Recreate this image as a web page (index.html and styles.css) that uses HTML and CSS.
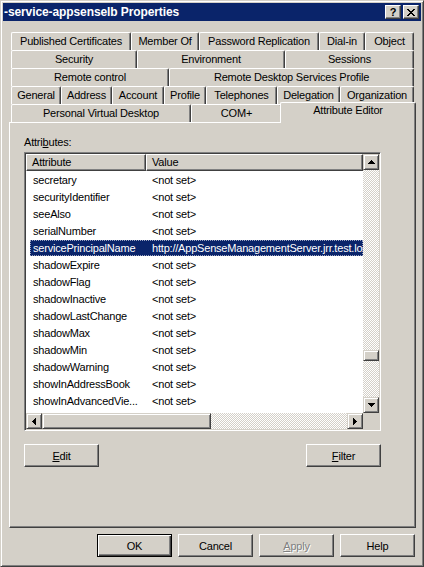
FILE: index.html
```html
<!DOCTYPE html>
<html>
<head>
<meta charset="utf-8">
<link rel="stylesheet" href="styles.css">
</head>
<body>
<div class="window">
  <div class="titlebar">
    <span class="title">-service-appsenselb Properties</span>
    <div class="caption-btns">
      <span class="cbtn help">?</span>
      <span class="cbtn close"><svg width="8" height="7" viewBox="0 0 8 7" shape-rendering="crispEdges"><path d="M0 0h2v1H0zM6 0h2v1H6zM1 1h2v1H1zM5 1h2v1H5zM2 2h4v1H2zM3 3h2v1H3zM2 4h4v1H2zM1 5h2v1H1zM5 5h2v1H5zM0 6h2v1H0zM6 6h2v1H6z" fill="#000"/></svg></span>
    </div>
  </div>
  <div class="content">
    <div class="tabs">
      <div class="tabrow r1">
        <div class="tab">Published Certificates</div>
        <div class="tab">Member Of</div>
        <div class="tab">Password Replication</div>
        <div class="tab">Dial-in</div>
        <div class="tab">Object</div>
      </div>
      <div class="tabrow r2">
        <div class="tab">Security</div>
        <div class="tab">Environment</div>
        <div class="tab">Sessions</div>
      </div>
      <div class="tabrow r3">
        <div class="tab">Remote control</div>
        <div class="tab">Remote Desktop Services Profile</div>
      </div>
      <div class="tabrow r4">
        <div class="tab">General</div>
        <div class="tab">Address</div>
        <div class="tab">Account</div>
        <div class="tab">Profile</div>
        <div class="tab">Telephones</div>
        <div class="tab">Delegation</div>
        <div class="tab">Organization</div>
      </div>
      <div class="tabrow r5">
        <div class="tab">Personal Virtual Desktop</div>
        <div class="tab">COM+</div>
        <div class="tab active">Attribute Editor</div>
      </div>
    </div>
    <div class="panel">
      <div class="label">Attri<u>b</u>utes:</div>
      <div class="listbox">
        <div class="lv">
          <div class="lv-header">
            <div class="hcol hc1">Attribute</div>
            <div class="hcol hc2">Value</div>
          </div>
          <div class="lv-rows">
            <div class="row"><div class="rowin"><span class="rc1">secretary</span><span class="rc2">&lt;not set&gt;</span></div></div>
            <div class="row"><div class="rowin"><span class="rc1">securityIdentifier</span><span class="rc2">&lt;not set&gt;</span></div></div>
            <div class="row"><div class="rowin"><span class="rc1">seeAlso</span><span class="rc2">&lt;not set&gt;</span></div></div>
            <div class="row"><div class="rowin"><span class="rc1">serialNumber</span><span class="rc2">&lt;not set&gt;</span></div></div>
            <div class="row sel"><div class="rowin"><span class="rc1">servicePrincipalName</span><span class="rc2">http://AppSenseManagementServer.jrr.test.local</span></div></div>
            <div class="row"><div class="rowin"><span class="rc1">shadowExpire</span><span class="rc2">&lt;not set&gt;</span></div></div>
            <div class="row"><div class="rowin"><span class="rc1">shadowFlag</span><span class="rc2">&lt;not set&gt;</span></div></div>
            <div class="row"><div class="rowin"><span class="rc1">shadowInactive</span><span class="rc2">&lt;not set&gt;</span></div></div>
            <div class="row"><div class="rowin"><span class="rc1">shadowLastChange</span><span class="rc2">&lt;not set&gt;</span></div></div>
            <div class="row"><div class="rowin"><span class="rc1">shadowMax</span><span class="rc2">&lt;not set&gt;</span></div></div>
            <div class="row"><div class="rowin"><span class="rc1">shadowMin</span><span class="rc2">&lt;not set&gt;</span></div></div>
            <div class="row"><div class="rowin"><span class="rc1">shadowWarning</span><span class="rc2">&lt;not set&gt;</span></div></div>
            <div class="row"><div class="rowin"><span class="rc1">showInAddressBook</span><span class="rc2">&lt;not set&gt;</span></div></div>
            <div class="row"><div class="rowin"><span class="rc1">showInAdvancedVie...</span><span class="rc2">&lt;not set&gt;</span></div></div>
            <div class="row"><div class="rowin"><span class="rc1">sIDHistory</span><span class="rc2">&lt;not set&gt;</span></div></div>
          </div>
        </div>
        <div class="vscroll">
          <div class="sbtn"><svg width="7" height="4" viewBox="0 0 7 4" shape-rendering="crispEdges"><path d="M3 0h1v1H3zM2 1h3v1H2zM1 2h5v1H1zM0 3h7v1H0z" fill="#000"/></svg></div>
          <div class="vtrack"><div class="vthumb"></div></div>
          <div class="sbtn"><svg width="7" height="4" viewBox="0 0 7 4" shape-rendering="crispEdges"><path d="M0 0h7v1H0zM1 1h5v1H1zM2 2h3v1H2zM3 3h1v1H3z" fill="#000"/></svg></div>
        </div>
        <div class="hscroll">
          <div class="sbtn"><svg width="4" height="7" viewBox="0 0 4 7" shape-rendering="crispEdges"><path d="M3 0h1v7H3zM2 1h1v5H2zM1 2h1v3H1zM0 3h1v1H0z" fill="#000"/></svg></div>
          <div class="htrack"><div class="hthumb"></div></div>
          <div class="sbtn"><svg width="4" height="7" viewBox="0 0 4 7" shape-rendering="crispEdges"><path d="M0 0h1v7H0zM1 1h1v5H1zM2 2h1v3H2zM3 3h1v1H3z" fill="#000"/></svg></div>
        </div>
        <div class="corner"></div>
      </div>
      <div class="pbtns">
        <button class="btn"><u>E</u>dit</button>
        <button class="btn"><u>F</u>ilter</button>
      </div>
    </div>
    <div class="dbtns">
      <button class="btn default">OK</button>
      <button class="btn">Cancel</button>
      <button class="btn disabled"><u>A</u>pply</button>
      <button class="btn">Help</button>
    </div>
  </div>
</div>
</body>
</html>
```
FILE: styles.css
```css
* { box-sizing: border-box; }
html, body { margin: 0; padding: 0; }
body {
  width: 424px;
  height: 567px;
  overflow: hidden;
  background: #d4d0c8;
  font-family: "Liberation Sans", Arial, sans-serif;
  font-size: 11px;
  letter-spacing: -0.2px;
  color: #000;
}
.window {
  width: 424px;
  height: 567px;
  border: 1px solid;
  border-color: #d4d0c8 #404040 #404040 #d4d0c8;
  box-shadow: inset 1px 1px #fff, inset -1px -1px #808080;
  padding: 2px;
  background: #d4d0c8;
  display: flex;
  flex-direction: column;
}
.titlebar {
  height: 18px;
  flex-shrink: 0;
  background: #0a246a;
  color: #fff;
  display: flex;
  align-items: center;
  justify-content: space-between;
}
.title {
  font-weight: bold;
  font-size: 12px;
  letter-spacing: -0.1px;
  padding-left: 1px;
}
.caption-btns { display: flex; gap: 2px; margin-right: 2px; }
.cbtn {
  width: 16px;
  height: 14px;
  background: #d4d0c8;
  border: 1px solid;
  border-color: #fff #404040 #404040 #fff;
  box-shadow: inset -1px -1px #808080;
  display: flex;
  align-items: center;
  justify-content: center;
  color: #000;
}
.cbtn.help { font-weight: bold; font-size: 11px; line-height: 12px; letter-spacing: 0; }
.cbtn.close svg { margin-right: 1px; }

.content { padding: 11px 5px 0 6px; }

.tabs { margin: 0 2px; }
.tabrow { display: grid; height: 18px; }
.r1 { grid-template-columns: 120px 68px 120px 46px 49px; }
.r2 { grid-template-columns: 126px 148px 129px; }
.r3 { grid-template-columns: 158px 245px; }
.r4 { grid-template-columns: 50px 51px 52px 42px 71px 63px 74px; }
.r5 { grid-template-columns: 180px 91px 132px; }
.tab {
  height: 18px;
  background: #d4d0c8;
  border-top: 1px solid #fff;
  border-left: 1px solid #fff;
  border-right: 1px solid #404040;
  box-shadow: inset -1px 0 #808080;
  border-radius: 2px 2px 0 0;
  text-align: center;
  line-height: 16px;
  white-space: nowrap;
}
.tab.active {
  position: relative;
  z-index: 2;
  margin: -2px -2px 0 -2px;
  height: 21px;
  line-height: 14px;
}

.panel {
  height: 406px;
  border: 1px solid;
  border-color: #fff #404040 #404040 #fff;
  box-shadow: inset -1px -1px #808080;
  padding: 13px 0 0 14px;
}
.label { height: 13px; line-height: 13px; }

.listbox {
  margin-top: 3px;
  width: 357px;
  height: 279px;
  border: 1px solid;
  border-color: #808080 #fff #fff #808080;
  box-shadow: inset 1px 1px #404040, inset -1px -1px #d4d0c8;
  padding: 1px;
  display: grid;
  grid-template-columns: 337px 16px;
  grid-template-rows: 259px 16px;
  background: #d4d0c8;
}
.lv {
  background: #fff;
  overflow: hidden;
  display: flex;
  flex-direction: column;
}
.lv-header { display: flex; height: 17px; flex-shrink: 0; }
.hcol {
  height: 17px;
  background: #d4d0c8;
  border: 1px solid;
  border-color: #fff #404040 #404040 #fff;
  box-shadow: inset -1px -1px #808080;
  line-height: 15px;
  padding-left: 5px;
  white-space: nowrap;
}
.hc1 { width: 120px; flex-shrink: 0; }
.hc2 { flex: 1; }
.lv-rows { overflow: hidden; flex: 1; }
.row {
  height: 17px;
  padding-left: 4px;
  display: flex;
  align-items: flex-end;
}
.rowin {
  flex: 1;
  height: 16px;
  line-height: 16px;
  display: flex;
  white-space: nowrap;
  overflow: hidden;
}
.rc1 { width: 116px; flex-shrink: 0; padding-left: 3px; overflow: hidden; }
.rc2 { padding-left: 6px; }
.row.sel .rowin {
  background: #0a246a;
  color: #fff;
  outline: 1px dotted #9aa2c0;
  outline-offset: -1px;
}

.sbtn {
  width: 16px;
  height: 16px;
  flex-shrink: 0;
  background: #d4d0c8;
  border: 1px solid;
  border-color: #d4d0c8 #404040 #404040 #d4d0c8;
  box-shadow: inset 1px 1px #fff, inset -1px -1px #808080;
  display: flex;
  align-items: center;
  justify-content: center;
}
.vscroll { display: flex; flex-direction: column; }
.vtrack, .htrack {
  flex: 1;
  background-color: #fff;
  background-image: conic-gradient(#fff 25%, #d4d0c8 0 50%, #fff 0 75%, #d4d0c8 0);
  background-size: 2px 2px;
}
.vtrack { padding-top: 180px; }
.vthumb, .hthumb {
  background: #d4d0c8;
  border: 1px solid;
  border-color: #d4d0c8 #404040 #404040 #d4d0c8;
  box-shadow: inset 1px 1px #fff, inset -1px -1px #808080;
}
.vthumb { height: 11px; }
.hscroll { display: flex; }
.htrack { display: flex; }
.hthumb { width: 169px; height: 16px; }
.corner { background: #d4d0c8; }

.btn {
  width: 75px;
  height: 23px;
  padding: 0;
  margin: 0;
  background: #d4d0c8;
  border: 1px solid;
  border-color: #fff #404040 #404040 #fff;
  box-shadow: inset -1px -1px #808080;
  font: inherit;
  letter-spacing: inherit;
  color: #000;
  display: flex;
  align-items: center;
  justify-content: center;
}
.btn.default {
  border: 1px solid #000;
  box-shadow: inset 1px 1px #fff, inset -1px -1px #404040, inset -2px -2px #808080;
}
.btn.disabled { color: #808080; text-shadow: 1px 1px #fff; }

.pbtns {
  margin-top: 13px;
  width: 357px;
  display: flex;
  justify-content: space-between;
}
.dbtns {
  margin-top: 6px;
  margin-right: 1px;
  display: flex;
  justify-content: flex-end;
  gap: 6px;
}
```
